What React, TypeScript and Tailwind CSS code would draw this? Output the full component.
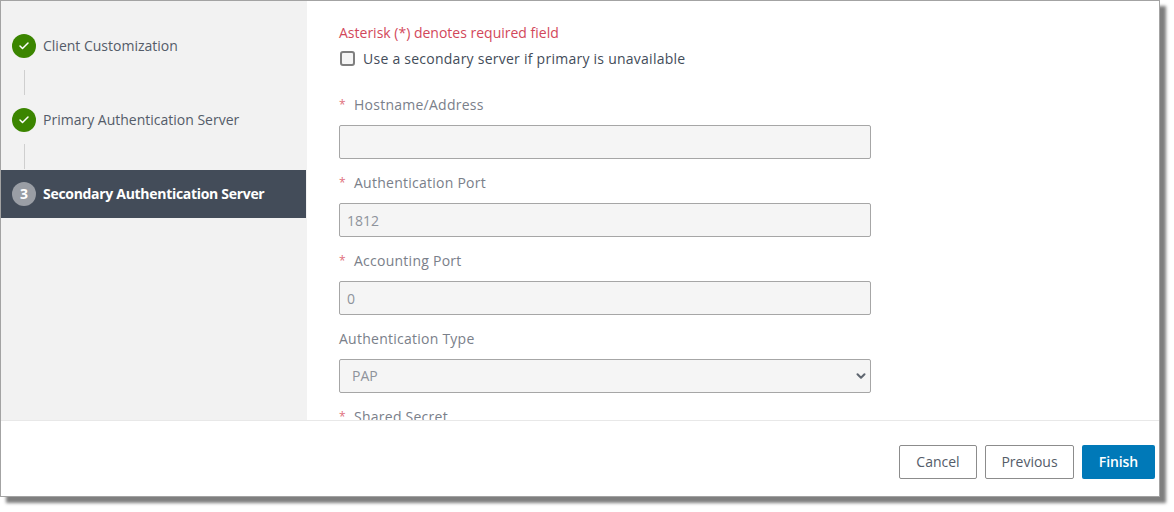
import { Check, ChevronDown } from 'lucide-react';

const font = { fontFamily: '"Open Sans", sans-serif' };

const Step = ({ label, number, active }: { label: string; number?: number; active?: boolean }) => (
  <div className={`flex h-12 items-center pl-[11px] ${active ? 'w-[305px] bg-[#434c59]' : ''}`}>
    {active ? (
      <div className="flex h-6 w-6 items-center justify-center rounded-full bg-[#9a9ea5] text-sm font-bold text-white">
        {number}
      </div>
    ) : (
      <div className="flex h-6 w-6 items-center justify-center rounded-full bg-[#3b8500]">
        <Check className="h-3 w-3 text-white" strokeWidth={3} />
      </div>
    )}
    <span className={`ml-[7px] text-sm ${active ? 'font-bold tracking-[-0.3px] text-white' : 'text-[#545c69]'}`}>
      {label}
    </span>
  </div>
);

const Connector = () => (
  <div className="h-[26px] pl-[23px]">
    <div className="h-[25px] w-px bg-[#cfcfcf]" />
  </div>
);

const Label = ({ text, required }: { text: string; required?: boolean }) => (
  <div className="flex h-5 items-center text-sm tracking-[0.25px] text-[#7a808a]">
    {required && <span className="w-[15px] text-xs text-[#e0707c]">*</span>}
    <span>{text}</span>
  </div>
);

const Field = ({ label, value, required }: { label: string; value?: string; required?: boolean }) => (
  <div className="mb-3.5">
    <Label text={label} required={required} />
    <input
      readOnly
      value={value ?? ''}
      className="mt-2.5 block h-[34px] w-[532px] rounded-[2px] border border-[#a6a6a6] bg-[#f5f5f5] pl-[7px] pr-2 text-sm text-[#8e939b] outline-none"
    />
  </div>
);

export default function App() {
  return (
    <div style={font} className="h-[512px] w-[1174px] overflow-hidden bg-white">
      <div className="flex h-[497px] w-[1160px] flex-col border border-[#a3a3a3] bg-white shadow-[6px_6px_3px_rgba(0,0,0,0.5)]">
        <div className="flex h-[419px] overflow-hidden">
          <aside className="w-[306px] shrink-0 bg-[#f2f2f2] pt-[21px]">
            <Step label="Client Customization" />
            <Connector />
            <Step label="Primary Authentication Server" />
            <Connector />
            <Step label="Secondary Authentication Server" number={3} active />
          </aside>
          <main className="pl-[32px] pt-[22px]">
            <p className="h-[19px] text-sm leading-[19px] text-[#d2475a]">Asterisk (*) denotes required field</p>
            <label className="mb-[27px] mt-[7px] flex h-[19px] items-center text-sm tracking-[0.25px] text-[#434c59]">
              <span className="ml-px h-[15px] w-[15px] rounded-[3px] border-2 border-[#7f7f7f] bg-[#f5f5f5]" />
              <span className="ml-[8px]">Use a secondary server if primary is unavailable</span>
            </label>
            <Field label="Hostname/Address" required />
            <Field label="Authentication Port" value="1812" required />
            <Field label="Accounting Port" value="0" required />
            <div className="mb-3.5">
              <Label text="Authentication Type" />
              <div className="relative mt-2.5 flex h-[34px] w-[532px] items-center rounded-[2px] border border-[#a6a6a6] bg-[#f5f5f5] pl-3 pr-2 text-sm text-[#8e939b]">
                PAP
                <ChevronDown className="absolute right-[2px] top-[9px] h-3.5 w-3.5 text-[#5f6670]" strokeWidth={3.5} />
              </div>
            </div>
            <Label text="Shared Secret" required />
          </main>
        </div>
        <footer className="flex flex-1 items-start justify-end gap-2 border-t border-[#e8e8e8] pr-1 pt-6">
          <button className="h-[34px] w-[78px] rounded-[2px] border border-[#8c8c8c] bg-white text-sm text-[#545c69]">Cancel</button>
          <button className="h-[34px] w-[89px] rounded-[2px] border border-[#8c8c8c] bg-white text-sm text-[#545c69]">Previous</button>
          <button className="h-[34px] w-[73px] rounded-[2px] bg-[#0079b8] text-sm font-semibold tracking-[-0.1px] text-white">Finish</button>
        </footer>
      </div>
    </div>
  );
}
